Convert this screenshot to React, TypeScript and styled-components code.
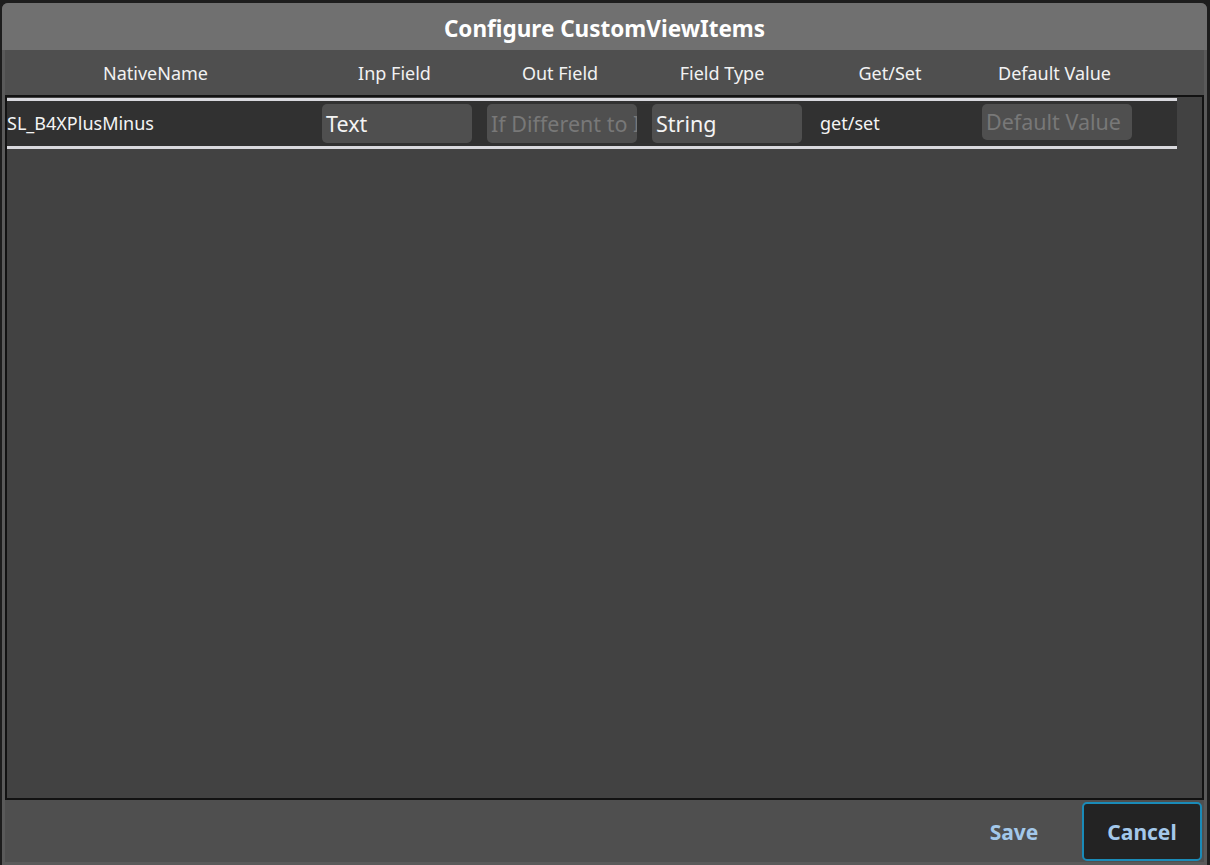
import React from "react";
import styled, { createGlobalStyle } from "styled-components";

const Global = createGlobalStyle`
  html, body { margin: 0; padding: 0; background: #1d1d1d; }
  body { font-family: "Noto Sans", "Open Sans", sans-serif; }
  * { box-sizing: border-box; }
`;

const Dialog = styled.div`
  margin: 3px 3px 0 2px;
  width: 1205px;
  height: 862px;
  background: #5a5a5a;
  border-radius: 6px 6px 0 0;
  overflow: hidden;
  display: flex;
  flex-direction: column;
`;

const Title = styled.div`
  height: 47px;
  background: #707070;
  color: #ffffff;
  font-weight: 700;
  font-size: 22.5px;
  display: flex;
  align-items: center;
  justify-content: center;
  padding-top: 3px;
`;

const Body = styled.div`
  flex: 1;
  display: flex;
  flex-direction: column;
  padding: 0 3px 3px 3px;
`;

const Header = styled.div`
  height: 45px;
  background: #4f4f4f;
  display: grid;
  grid-template-columns: 301px 177px 154px 170px 166px 163px 1fr;
  align-items: center;
`;

const HeadCell = styled.div`
  color: #f2f2f2;
  font-size: 18px;
  text-align: center;
  white-space: nowrap;
`;

const List = styled.div`
  flex: 1;
  background: #424242;
  border: 2px solid #121212;
  padding-top: 1px;
`;

const Row = styled.div`
  width: 1170px;
  height: 51px;
  background: #313131;
  border-top: 3px solid #d9d9de;
  border-bottom: 3px solid #d9d9de;
  display: grid;
  grid-template-columns: 315px 165px 165px 168px 162px 150px;
  align-items: start;
  padding-top: 3px;
`;

const NameCell = styled.div`
  color: #f4f4f4;
  font-size: 18px;
  line-height: 39px;
  white-space: nowrap;
`;

const PlainCell = styled.div`
  color: #f4f4f4;
  font-size: 18px;
  line-height: 39px;
  white-space: nowrap;
`;

const Field = styled.div<{ $placeholder?: boolean; $short?: boolean }>`
  width: 150px;
  height: ${(p) => (p.$short ? 36 : 39)}px;
  background: #4f4f4f;
  border-radius: 5px;
  padding-left: 4px;
  color: ${(p) => (p.$placeholder ? "#787878" : "#f4f4f4")};
  font-size: 21.5px;
  line-height: ${(p) => (p.$short ? 36 : 39)}px;
  white-space: nowrap;
  overflow: hidden;
`;

const Footer = styled.div`
  height: 62px;
  background: #4f4f4f;
  display: flex;
  justify-content: flex-end;
  align-items: flex-start;
  gap: 8px;
  padding: 2px 2px 0 0;
`;

const Button = styled.div<{ $focused?: boolean }>`
  width: 120px;
  height: 59px;
  border-radius: 5px;
  display: flex;
  align-items: center;
  justify-content: center;
  font-size: 21px;
  font-weight: 700;
  color: #a3c8ea;
  background: ${(p) => (p.$focused ? "#232323" : "transparent")};
  border: ${(p) => (p.$focused ? "2px solid #1a8bb8" : "2px solid transparent")};
  padding-top: 1px;
`;

export default function App() {
  return (
    <>
      <Global />
      <Dialog>
        <Title>Configure CustomViewItems</Title>
        <Body>
          <Header>
            <HeadCell>NativeName</HeadCell>
            <HeadCell>Inp Field</HeadCell>
            <HeadCell>Out Field</HeadCell>
            <HeadCell>Field Type</HeadCell>
            <HeadCell>Get/Set</HeadCell>
            <HeadCell>Default Value</HeadCell>
            <div />
          </Header>
          <List>
            <Row>
              <NameCell>SL_B4XPlusMinus</NameCell>
              <Field>Text</Field>
              <Field $placeholder>If Different to Inp Field</Field>
              <Field>String</Field>
              <PlainCell>get/set</PlainCell>
              <Field $placeholder $short>Default Value</Field>
            </Row>
          </List>
          <Footer>
            <Button>Save</Button>
            <Button $focused>Cancel</Button>
          </Footer>
        </Body>
      </Dialog>
    </>
  );
}
